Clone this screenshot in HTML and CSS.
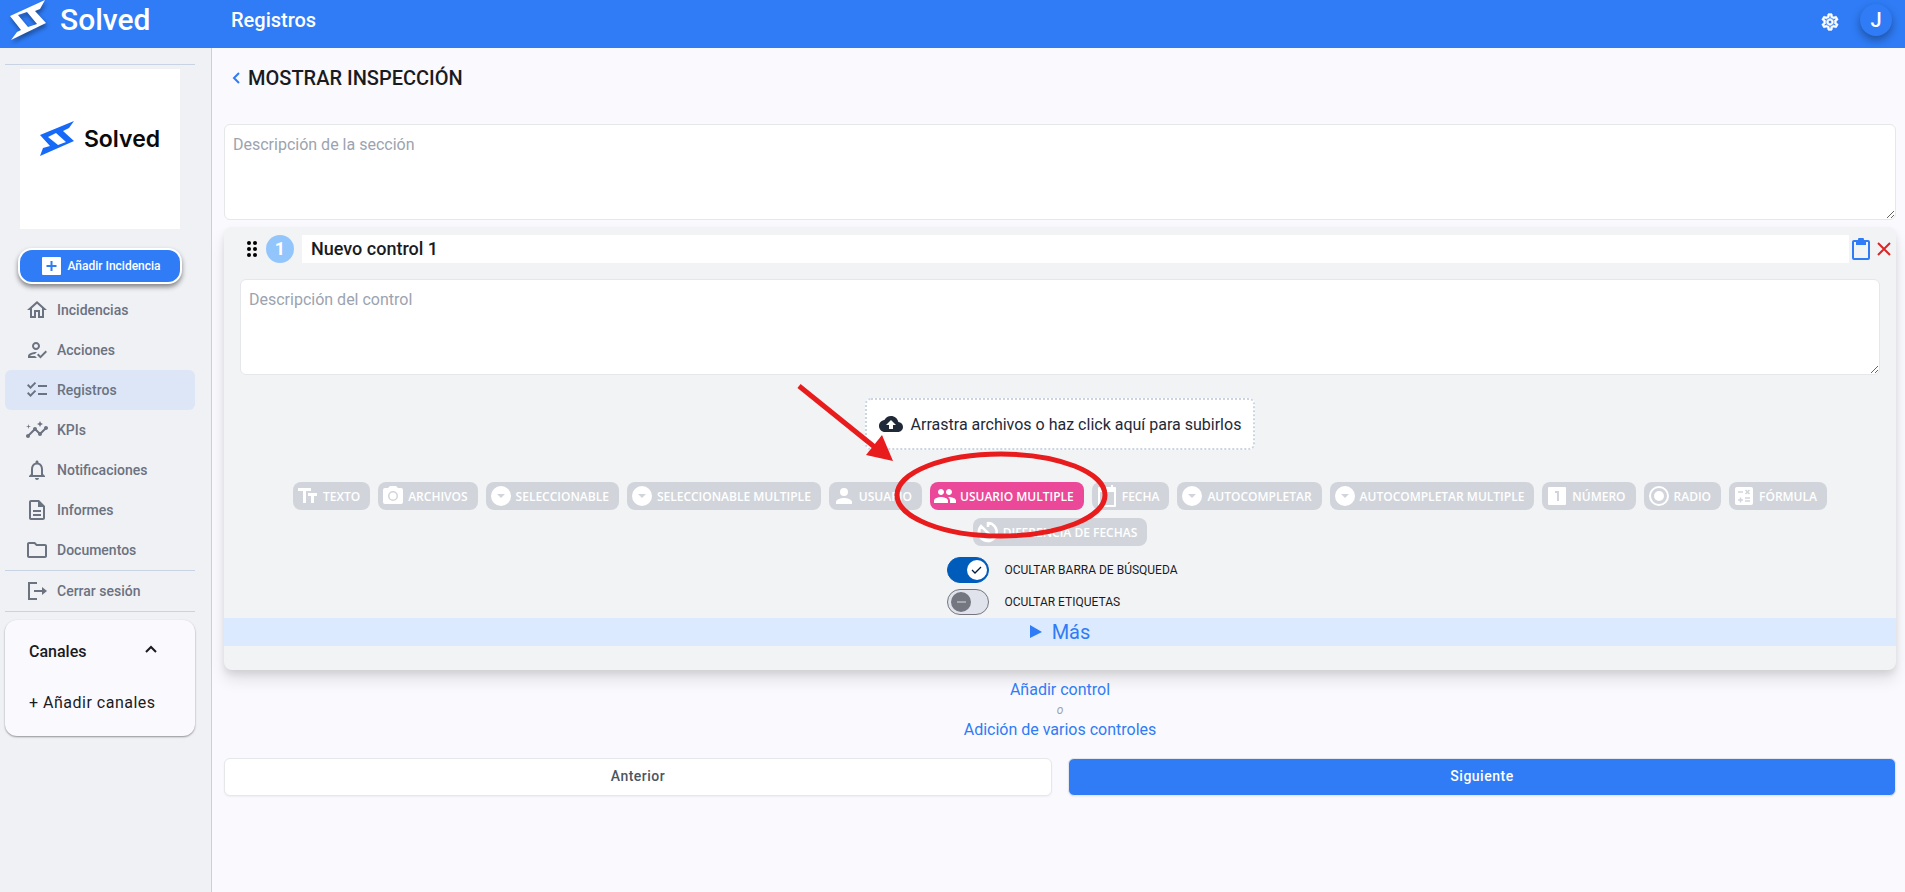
FILE: index.html
```html
<!DOCTYPE html>
<html lang="es">
<head>
    <meta charset="UTF-8">
    <meta name="viewport" content="width=device-width, initial-scale=1.0">
    <title>Solved - Registros</title>
    <link rel="stylesheet" href="styles.css">
</head>
<body>
    <header class="header">
        <a href="#" class="brand">
            <svg class="brand-logo" viewBox="0 0 36 40" width="36" height="40"><path fill-rule="evenodd" d="M35 0 0 16l11 14-4 2-6 8 35-17-11-12 5-2zM8 15l9-3 10 12-9 3z"/></svg>
            <span>Solved</span>
        </a>
        <h1>Registros</h1>
        <div class="header-actions">
            <button class="icon-btn settings" aria-label="Ajustes">
                <svg viewBox="0 0 24 24" width="20" height="20" fill="currentColor"><path d="M19.43 12.98c.04-.32.07-.64.07-.98s-.03-.66-.07-.98l2.11-1.65c.19-.15.24-.42.12-.64l-2-3.46c-.09-.16-.26-.25-.44-.25-.06 0-.12.01-.17.03l-2.49 1c-.52-.4-1.08-.73-1.69-.98l-.38-2.65C14.46 2.18 14.25 2 14 2h-4c-.25 0-.46.18-.49.42l-.38 2.65c-.61.25-1.17.59-1.69.98l-2.49-1c-.06-.02-.12-.03-.18-.03-.17 0-.34.09-.43.25l-2 3.46c-.13.22-.07.49.12.64l2.11 1.65c-.04.32-.07.65-.07.98s.03.66.07.98l-2.11 1.65c-.19.15-.24.42-.12.64l2 3.46c.09.16.26.25.44.25.06 0 .12-.01.17-.03l2.49-1c.52.4 1.08.73 1.69.98l.38 2.65c.03.24.24.42.49.42h4c.25 0 .46-.18.49-.42l.38-2.65c.61-.25 1.17-.59 1.69-.98l2.49 1c.06.02.12.03.18.03.17 0 .34-.09.43-.25l2-3.46c.12-.22.07-.49-.12-.64zm-1.98-1.71c.04.31.05.52.05.73s-.02.43-.05.73l-.14 1.13.89.7 1.08.84-.7 1.21-1.27-.51-1.04-.42-.9.68c-.43.32-.84.56-1.25.73l-1.06.43-.16 1.13-.2 1.35h-1.4l-.19-1.35-.16-1.13-1.06-.43c-.43-.18-.83-.41-1.23-.71l-.91-.7-1.06.43-1.27.51-.7-1.21 1.08-.84.89-.7-.14-1.13c-.03-.31-.05-.54-.05-.74s.02-.43.05-.73l.14-1.13-.89-.7-1.08-.84.7-1.21 1.27.51 1.04.42.9-.68c.43-.32.84-.56 1.25-.73l1.06-.43.16-1.13.2-1.35h1.39l.19 1.35.16 1.13 1.06.43c.43.18.83.41 1.23.71l.91.7 1.06-.43 1.27-.51.7 1.21-1.07.85-.89.7zM12 8c-2.21 0-4 1.79-4 4s1.79 4 4 4 4-1.79 4-4-1.79-4-4-4m0 6c-1.1 0-2-.9-2-2s.9-2 2-2 2 .9 2 2-.9 2-2 2" stroke="currentColor" stroke-width=".8"/></svg>
            </button>
            <button class="avatar">J</button>
        </div>
    </header>

    <div class="layout">
        <aside class="sidebar">
            <div class="company">
                <svg viewBox="0 0 34 38" width="34" height="38"><path fill="#1769f8" fill-rule="evenodd" d="M34 1 0 15l10 11-7 2-3 8 34-15-11-10 6-3zM8 17l8-4 10 9-8 3z"/></svg>
                <span>Solved</span>
            </div>
            <button class="add-btn">
                <svg viewBox="0 0 20 20" width="20" height="20"><rect x="0" y="1" width="19" height="18" rx="1" fill="#fff"/><path d="M9.500 5v10M4.500 10h10" stroke="#2f7cf6" stroke-width="2"/></svg>
                Añadir Incidencia
            </button>
            <nav class="menu">
                <a href="#"><svg viewBox="0 0 24 24"><path d="m12 5.690 5 4.500V18h-2v-6H9v6H7v-7.810zM12 3 2 12h3v8h6v-6h2v6h6v-8h3z"/></svg>Incidencias</a>
                <a href="#"><svg viewBox="0 0 24 24"><path d="M11 12c2.210 0 4-1.790 4-4s-1.790-4-4-4-4 1.790-4 4 1.790 4 4 4m0-6c1.100 0 2 .9 2 2s-.9 2-2 2-2-.9-2-2 .9-2 2-2M5 18c.2-.63 2.570-1.680 4.960-1.940l2.040-2c-.39-.04-.68-.06-1-.06-2.670 0-8 1.340-8 4v2h9l-2-2zm15.600-5.500-5.130 5.170-2.070-2.080L12 17l3.470 3.500L22 13.910z"/></svg>Acciones</a>
                <a href="#" class="active"><svg viewBox="0 0 24 24"><path d="M22 7h-9v2h9zm0 8h-9v2h9zM5.540 11 2 7.460l1.410-1.410 2.120 2.120 4.240-4.240 1.410 1.410zm0 8L2 15.460l1.410-1.410 2.120 2.120 4.240-4.240 1.410 1.410z"/></svg>Registros</a>
                <a href="#"><svg viewBox="0 0 24 24"><path d="M21 8c-1.450 0-2.260 1.440-1.930 2.510l-3.550 3.560c-.3-.09-.74-.09-1.040 0l-2.550-2.550C12.270 10.450 11.460 9 10 9c-1.450 0-2.270 1.440-1.930 2.520l-4.560 4.550C2.440 15.740 1 16.550 1 18c0 1.100.9 2 2 2 1.450 0 2.260-1.440 1.930-2.510l4.550-4.560c.3.09.74.09 1.040 0l2.550 2.550C12.730 16.550 13.540 18 15 18c1.450 0 2.270-1.440 1.930-2.520l3.560-3.550c1.070.33 2.510-.48 2.510-1.930 0-1.100-.9-2-2-2m-6 1 .94-2.070L18 6l-2.060-.93L15 3l-.92 2.070L12 6l2.080.93zM3.500 11 4 9l2-.5L4 8l-.5-2L3 8l-2 .5L3 9z"/></svg>KPIs</a>
                <a href="#"><svg viewBox="0 0 24 24"><path d="M12 22c1.100 0 2-.9 2-2h-4c0 1.100.9 2 2 2m6-6v-5c0-3.070-1.630-5.640-4.500-6.320V4c0-.83-.67-1.500-1.500-1.500s-1.500.67-1.500 1.500v.68C7.640 5.360 6 7.920 6 11v5l-2 2v1h16v-1zm-2 1H8v-6c0-2.480 1.510-4.500 4-4.500s4 2.020 4 4.500z"/></svg>Notificaciones</a>
                <a href="#"><svg viewBox="0 0 24 24"><path d="M8 16h8v2H8zm0-4h8v2H8zm6-10H6c-1.100 0-2 .9-2 2v16c0 1.100.89 2 1.990 2H18c1.100 0 2-.9 2-2V8zm4 18H6V4h7v5h5z"/></svg>Informes</a>
                <a href="#"><svg viewBox="0 0 24 24"><path d="M9.170 6l2 2H20v10H4V6zM10 4H4c-1.100 0-1.990.9-1.990 2L2 18c0 1.100.9 2 2 2h16c1.100 0 2-.9 2-2V8c0-1.100-.9-2-2-2h-8z"/></svg>Documentos</a>
            </nav>
            <nav class="menu logout">
                <a href="#"><svg viewBox="0 0 24 24"><path d="M3 3h9v2H5v14h7v2H3zM9 11h8V8l5 4-5 4v-3H9z"/></svg>Cerrar sesión</a>
            </nav>
            <div class="channels">
                <button class="channels-head">Canales
                    <svg viewBox="0 0 12 8" width="12" height="8" fill="none" stroke="currentColor" stroke-width="2"><path d="m1 7 5-5 5 5"/></svg>
                </button>
                <a href="#">+ Añadir canales</a>
            </div>
        </aside>

        <main class="content">
            <a href="#" class="back">
                <svg viewBox="0 0 8 12" width="8" height="12" fill="none" stroke="#2f7cf6" stroke-width="2"><path d="M7 1 2 6l5 5"/></svg>
                <h2>MOSTRAR INSPECCIÓN</h2>
            </a>
            <textarea class="description" aria-label="Descripción de la sección" placeholder="Descripción de la sección"></textarea>

            <section class="card">
                <div class="card-head">
                    <svg class="drag" viewBox="0 0 10 16" width="10" height="16"><circle cx="2" cy="2" r="2"/><circle cx="8" cy="2" r="2"/><circle cx="2" cy="8" r="2"/><circle cx="8" cy="8" r="2"/><circle cx="2" cy="14" r="2"/><circle cx="8" cy="14" r="2"/></svg>
                    <span class="number">1</span>
                    <input type="text" class="control-name" aria-label="Nombre del control" value="Nuevo control 1">
                    <button class="icon-btn copy" aria-label="Copiar control">
                        <svg viewBox="0 0 18 22" width="18" height="22"><path fill="#2f7cf6" fill-rule="evenodd" d="M2 2h4a3 3 0 0 1 6 0h4a2 2 0 0 1 2 2v16a2 2 0 0 1-2 2H2a2 2 0 0 1-2-2V4a2 2 0 0 1 2-2m0 2v16h14V4h-2v3H4V4z"/></svg>
                    </button>
                    <button class="icon-btn remove" aria-label="Eliminar control">
                        <svg viewBox="0 0 14 14" width="14" height="14" stroke="#dc2626" stroke-width="2"><path d="m1 1 12 12M13 1 1 13"/></svg>
                    </button>
                </div>
                <textarea class="description" aria-label="Descripción del control" placeholder="Descripción del control"></textarea>
                <button class="dropzone">
                    <svg viewBox="0 0 24 24" width="24" height="24" fill="currentColor"><path d="M19.350 10.040C18.670 6.590 15.640 4 12 4 9.110 4 6.600 5.640 5.350 8.040 2.340 8.360 0 10.910 0 14c0 3.310 2.690 6 6 6h13c2.760 0 5-2.240 5-5 0-2.640-2.050-4.780-4.650-4.960M14 13v4h-4v-4H7l5-5 5 5z"/></svg>
                    Arrastra archivos o haz click aquí para subirlos
                </button>

                <div class="types">
                    <button class="type"><svg viewBox="0 0 24 24"><path d="M2 4v3h5v12h3V7h5V4zm19 5h-9v3h3v7h3v-7h3z"/></svg>TEXTO</button>
                    <button class="type"><svg viewBox="0 0 24 24"><path fill-rule="evenodd" d="M9 2 7 4H4a2 2 0 0 0-2 2v12a2 2 0 0 0 2 2h16a2 2 0 0 0 2-2V6a2 2 0 0 0-2-2h-3l-2-2zm3 15a5 5 0 1 1 0-10 5 5 0 0 1 0 10m0-1.500a3.500 3.500 0 1 0 0-7 3.500 3.500 0 0 0 0 7"/></svg>ARCHIVOS</button>
                    <button class="type"><svg viewBox="0 0 24 24"><path fill-rule="evenodd" d="M12 2a10 10 0 1 0 0 20 10 10 0 0 0 0-20m0 12-4-4h8z"/></svg>SELECCIONABLE</button>
                    <button class="type"><svg viewBox="0 0 24 24"><path fill-rule="evenodd" d="M12 2a10 10 0 1 0 0 20 10 10 0 0 0 0-20m0 12-4-4h8z"/></svg>SELECCIONABLE MULTIPLE</button>
                    <button class="type"><svg viewBox="0 0 24 24"><path d="M12 12a4 4 0 1 0 0-8 4 4 0 0 0 0 8m0 2c-2.670 0-8 1.340-8 4v2h16v-2c0-2.660-5.330-4-8-4"/></svg>USUARIO</button>
                    <div class="type-marked">
                        <button class="type selected"><svg viewBox="0 0 24 24"><path d="M16 11c1.660 0 2.990-1.340 2.990-3S17.660 5 16 5s-3 1.340-3 3 1.340 3 3 3m-8 0c1.660 0 2.990-1.340 2.990-3S9.660 5 8 5 5 6.340 5 8s1.340 3 3 3m0 2c-2.330 0-7 1.170-7 3.500V19h14v-2.500c0-2.330-4.670-3.500-7-3.500m8 0c-.29 0-.62.020-.97.050 1.160.84 1.970 1.970 1.970 3.450V19h6v-2.500c0-2.330-4.670-3.500-7-3.500"/></svg>USUARIO MULTIPLE</button>
                        <svg class="marker" viewBox="0 0 320 160" width="320" height="160" fill="none" stroke="#e81c1c"><path stroke-width="5" d="m5 3 83 67"/><path fill="#e81c1c" stroke="none" d="m88 52 11 26-27-6z"/><ellipse cx="207" cy="112" rx="104" ry="41" stroke-width="5"/></svg>
                    </div>
                    <button class="type"><svg viewBox="0 0 24 24"><path fill-rule="evenodd" d="M4 3h2V1h2v2h8V1h2v2h2a1 1 0 0 1 1 1v18a1 1 0 0 1-1 1H4a1 1 0 0 1-1-1V4a1 1 0 0 1 1-1m1 5v13h14V8z"/></svg>FECHA</button>
                    <button class="type"><svg viewBox="0 0 24 24"><path fill-rule="evenodd" d="M12 2a10 10 0 1 0 0 20 10 10 0 0 0 0-20m0 12-4-4h8z"/></svg>AUTOCOMPLETAR</button>
                    <button class="type"><svg viewBox="0 0 24 24"><path fill-rule="evenodd" d="M12 2a10 10 0 1 0 0 20 10 10 0 0 0 0-20m0 12-4-4h8z"/></svg>AUTOCOMPLETAR MULTIPLE</button>
                    <button class="type"><svg viewBox="0 0 24 24"><path fill-rule="evenodd" d="M4 3h16a1 1 0 0 1 1 1v16a1 1 0 0 1-1 1H4a1 1 0 0 1-1-1V4a1 1 0 0 1 1-1m6 4v2h2v8h2V7z"/></svg>NÚMERO</button>
                    <button class="type"><svg viewBox="0 0 24 24"><circle cx="12" cy="12" r="5"/><circle cx="12" cy="12" r="9" fill="none" stroke="currentColor" stroke-width="2"/></svg>RADIO</button>
                    <button class="type"><svg viewBox="0 0 24 24"><rect x="3" y="3" width="18" height="18" rx="2"/><path class="cut" d="M6 8h5M13 17h5M13 14h5M6 16h5M8.500 13.500v5M13.500 6l4 4M17.500 6l-4 4"/></svg>FÓRMULA</button>
                    <button class="type"><svg viewBox="0 0 24 24"><path fill="none" stroke="currentColor" stroke-width="2.500" d="M12 2v5M12 3a9 9 0 1 1-7 3l9 9M5 6a9 9 0 0 0 12 13"/></svg>DIFERENCIA DE FECHAS</button>
                </div>

                <div class="switches">
                    <label><input type="checkbox" class="switch" checked>OCULTAR BARRA DE BÚSQUEDA</label>
                    <label><input type="checkbox" class="switch">OCULTAR ETIQUETAS</label>
                </div>
                <button class="more"><svg viewBox="0 0 12 14" width="12" height="14"><path fill="currentColor" d="M0 0v13l12-6z"/></svg>Más</button>
            </section>

            <div class="add-links">
                <a href="#">Añadir control</a>
                <em>o</em>
                <a href="#">Adición de varios controles</a>
            </div>
            <div class="steps">
                <button class="step">Anterior</button>
                <button class="step next">Siguiente</button>
            </div>
        </main>
    </div>
</body>
</html>
```
FILE: styles.css
```css
* {
    box-sizing: border-box;
}
body {
    margin: 0;
    min-height: 100vh;
    display: flex;
    flex-direction: column;
    font-family: Roboto, sans-serif;
    font-size: 16px;
    line-height: 24px;
    color: #1a1b1f;
    background: #faf9fd;
}
button, input, textarea {
    font-family: inherit;
    margin: 0;
}
button {
    border: none;
    padding: 0;
    cursor: pointer;
}
a {
    color: inherit;
    text-decoration: none;
}
svg {
    flex-shrink: 0;
}
.header {
    display: flex;
    align-items: flex-start;
    height: 48px;
    padding-right: 13px;
    background: #2f7cf6;
    color: #fff;
}
.brand {
    display: flex;
    gap: 14px;
    width: 231px;
    padding-left: 10px;
    font-size: 30px;
    font-weight: 500;
    line-height: 40px;
}
.brand-logo {
    fill: #fff;
    filter: drop-shadow(1px 3px 2px rgba(0, 0, 0, 0.4));
}
.header h1 {
    margin: 0;
    font-size: 20px;
    font-weight: 500;
    line-height: 40px;
}
.header-actions {
    display: flex;
    align-items: flex-start;
    gap: 20px;
    margin-left: auto;
}
.icon-btn {
    display: flex;
    align-items: center;
    background: none;
    color: inherit;
}
.settings {
    height: 44px;
}
.avatar {
    width: 32px;
    height: 32px;
    margin-top: 4px;
    border-radius: 50%;
    background: #2f7cf6;
    color: #fff;
    font-size: 20px;
    font-weight: 500;
    box-shadow: 0 4px 8px rgba(0, 0, 0, 0.35);
}
.layout {
    flex: 1;
    display: flex;
}
.sidebar {
    width: 212px;
    flex-shrink: 0;
    padding: 16px 16px 0 5px;
    background: #f0f1f5;
    border-right: 1px solid #cbd0d9;
}
.sidebar::before {
    content: "";
    display: block;
    border-top: 1px solid #c8d3e3;
}
.company {
    display: flex;
    justify-content: center;
    gap: 10px;
    width: 160px;
    height: 160px;
    margin: 4px 0 19px 15px;
    padding-top: 51px;
    background: #fff;
    color: #0a0a0a;
    font-family: Inter, sans-serif;
    font-size: 23px;
    font-weight: 600;
    line-height: 38px;
}
.add-btn {
    display: flex;
    align-items: center;
    justify-content: center;
    gap: 5px;
    width: 164px;
    height: 36px;
    margin: 0 0 6px 13px;
    padding-left: 3px;
    border: 2px solid #fff;
    border-radius: 14px;
    background: #2f7cf6;
    color: #fff;
    font-size: 12px;
    font-weight: 500;
    box-shadow: 0 3px 5px rgba(0, 0, 0, 0.45);
}
.menu a {
    display: flex;
    align-items: center;
    gap: 8px;
    height: 40px;
    padding-left: 20px;
    border-radius: 6px;
    color: #6b7280;
    font-size: 14px;
    font-weight: 500;
}
.menu svg {
    width: 24px;
    height: 24px;
    fill: currentColor;
}
.menu .active {
    background: #dce6f6;
}
.logout {
    border-top: 1px solid #c8d3e3;
    border-bottom: 1px solid #c8d3e3;
}
.channels {
    margin-top: 8px;
    padding: 20px 24px 21px;
    border-radius: 12px;
    background: #faf9fd;
    box-shadow: 0 1px 2px rgba(0, 0, 0, 0.4);
}
.channels-head {
    display: flex;
    align-items: center;
    justify-content: space-between;
    width: 100%;
    margin-bottom: 27px;
    padding-right: 14px;
    background: none;
    color: inherit;
    font-size: 16px;
    font-weight: 500;
    line-height: 24px;
}
.channels-head svg {
    margin-bottom: 6px;
}
.channels a {
    letter-spacing: 0.5px;
}
.content {
    flex: 1;
    min-width: 0;
    padding: 16px 9px 16px 12px;
}
.back {
    display: flex;
    align-items: center;
    gap: 8px;
    margin-bottom: 32px;
    padding-left: 8px;
}
.back h2 {
    margin: 0;
    font-size: 20px;
    font-weight: 500;
    line-height: 28px;
}
.description {
    display: block;
    width: 100%;
    height: 96px;
    padding: 8px;
    border: 1px solid #e5e7eb;
    border-radius: 6px;
    background: #fff;
    font-size: 16px;
    line-height: 24px;
}
.description::placeholder {
    color: #9ca3af;
}
.card {
    display: flex;
    flex-direction: column;
    align-items: center;
    margin-top: 7px;
    padding: 8px 0 24px;
    border-radius: 8px;
    background: #f2f3f5;
    box-shadow: 0 10px 15px rgba(0, 0, 0, 0.1), 0 4px 6px rgba(0, 0, 0, 0.08);
}
.card-head {
    display: flex;
    align-items: center;
    align-self: stretch;
    padding: 0 5px 0 23px;
}
.number {
    width: 28px;
    margin: 0 8px 0 9px;
    border-radius: 50%;
    background: #93c5fd;
    color: #fff;
    font-size: 18px;
    font-weight: 700;
    line-height: 28px;
    text-align: center;
}
.control-name {
    flex: 1;
    height: 28px;
    padding: 0 9px 2px;
    border: none;
    background: #fff;
    color: #1a1b1f;
    font-size: 18px;
    font-weight: 500;
}
.copy {
    margin: 0 7px 0 3px;
}
.card .description {
    width: calc(100% - 32px);
    margin: 16px 16px 23px;
}
.dropzone {
    display: flex;
    align-items: center;
    gap: 8px;
    height: 52px;
    padding: 0 12px;
    border: 2px dotted #cbd5e1;
    border-radius: 6px;
    background: #fff;
    color: #1f2937;
    font-size: 16px;
}
.types {
    display: flex;
    flex-wrap: wrap;
    justify-content: center;
    gap: 8px;
    margin: 32px 48px 11px;
}
.type {
    display: flex;
    align-items: center;
    gap: 3px;
    height: 28px;
    padding: 0 10px 0 3px;
    border-radius: 8px;
    background: #d1d5db;
    color: #fff;
    font-family: "Open Sans", sans-serif;
    font-size: 12px;
    font-weight: 600;
}
.type svg {
    width: 24px;
    height: 24px;
    fill: currentColor;
}
.type .cut {
    stroke: #d1d5db;
    stroke-width: 1.5;
}
.type.selected {
    background: #ec4899;
}
.type-marked {
    position: relative;
}
/* hand-drawn arrow and ring over the selected type */
.type-marked .marker {
    position: absolute;
    left: -136px;
    top: -99px;
    z-index: 1;
    pointer-events: none;
}
.switches {
    display: flex;
    flex-direction: column;
    gap: 6px;
    margin: 0 0 3px 4px;
}
.switches label {
    display: flex;
    align-items: center;
    gap: 16px;
    font-size: 12px;
    line-height: 26px;
}
.switch {
    appearance: none;
    width: 42px;
    height: 26px;
    margin: 0;
    border: 1px solid #74777f;
    border-radius: 13px;
    background: no-repeat 3px center / 20px url("data:image/svg+xml,%3Csvg xmlns='http://www.w3.org/2000/svg' viewBox='0 0 20 20'%3E%3Ccircle cx='10' cy='10' r='10' fill='%2374777f'/%3E%3Cpath d='M6 10h9' stroke='%23a5a8af' stroke-width='2'/%3E%3C/svg%3E") #e0e2ec;
}
.switch:checked {
    border-color: #005cbb;
    background: no-repeat 19px center / 20px url("data:image/svg+xml,%3Csvg xmlns='http://www.w3.org/2000/svg' viewBox='0 0 20 20'%3E%3Ccircle cx='10' cy='10' r='10' fill='white'/%3E%3Cpath d='m5 10 3 3 6-6' fill='none' stroke='%23001b3f' stroke-width='1.300'/%3E%3C/svg%3E") #005cbb;
}
.more {
    display: flex;
    align-items: center;
    justify-content: center;
    gap: 10px;
    align-self: stretch;
    height: 28px;
    background: #dbeafe;
    color: #2f7cf6;
    font-size: 20px;
}
.add-links {
    display: flex;
    flex-direction: column;
    align-items: center;
    margin: 8px 0 16px;
    color: #2f7cf6;
}
.add-links em {
    color: #9ca3af;
    font-size: 12px;
    line-height: 16px;
}
.steps {
    display: grid;
    grid-template-columns: 1fr 1fr;
    gap: 16px;
}
.step {
    height: 38px;
    padding-bottom: 2px;
    border: 1px solid #e5e7eb;
    border-radius: 6px;
    background: #fff;
    color: #4b5563;
    font-size: 14px;
    font-weight: 500;
    letter-spacing: 0.5px;
    box-shadow: 0 1px 2px rgba(0, 0, 0, 0.05);
}
.next {
    background: #2f7cf6;
    color: #fff;
}
```
